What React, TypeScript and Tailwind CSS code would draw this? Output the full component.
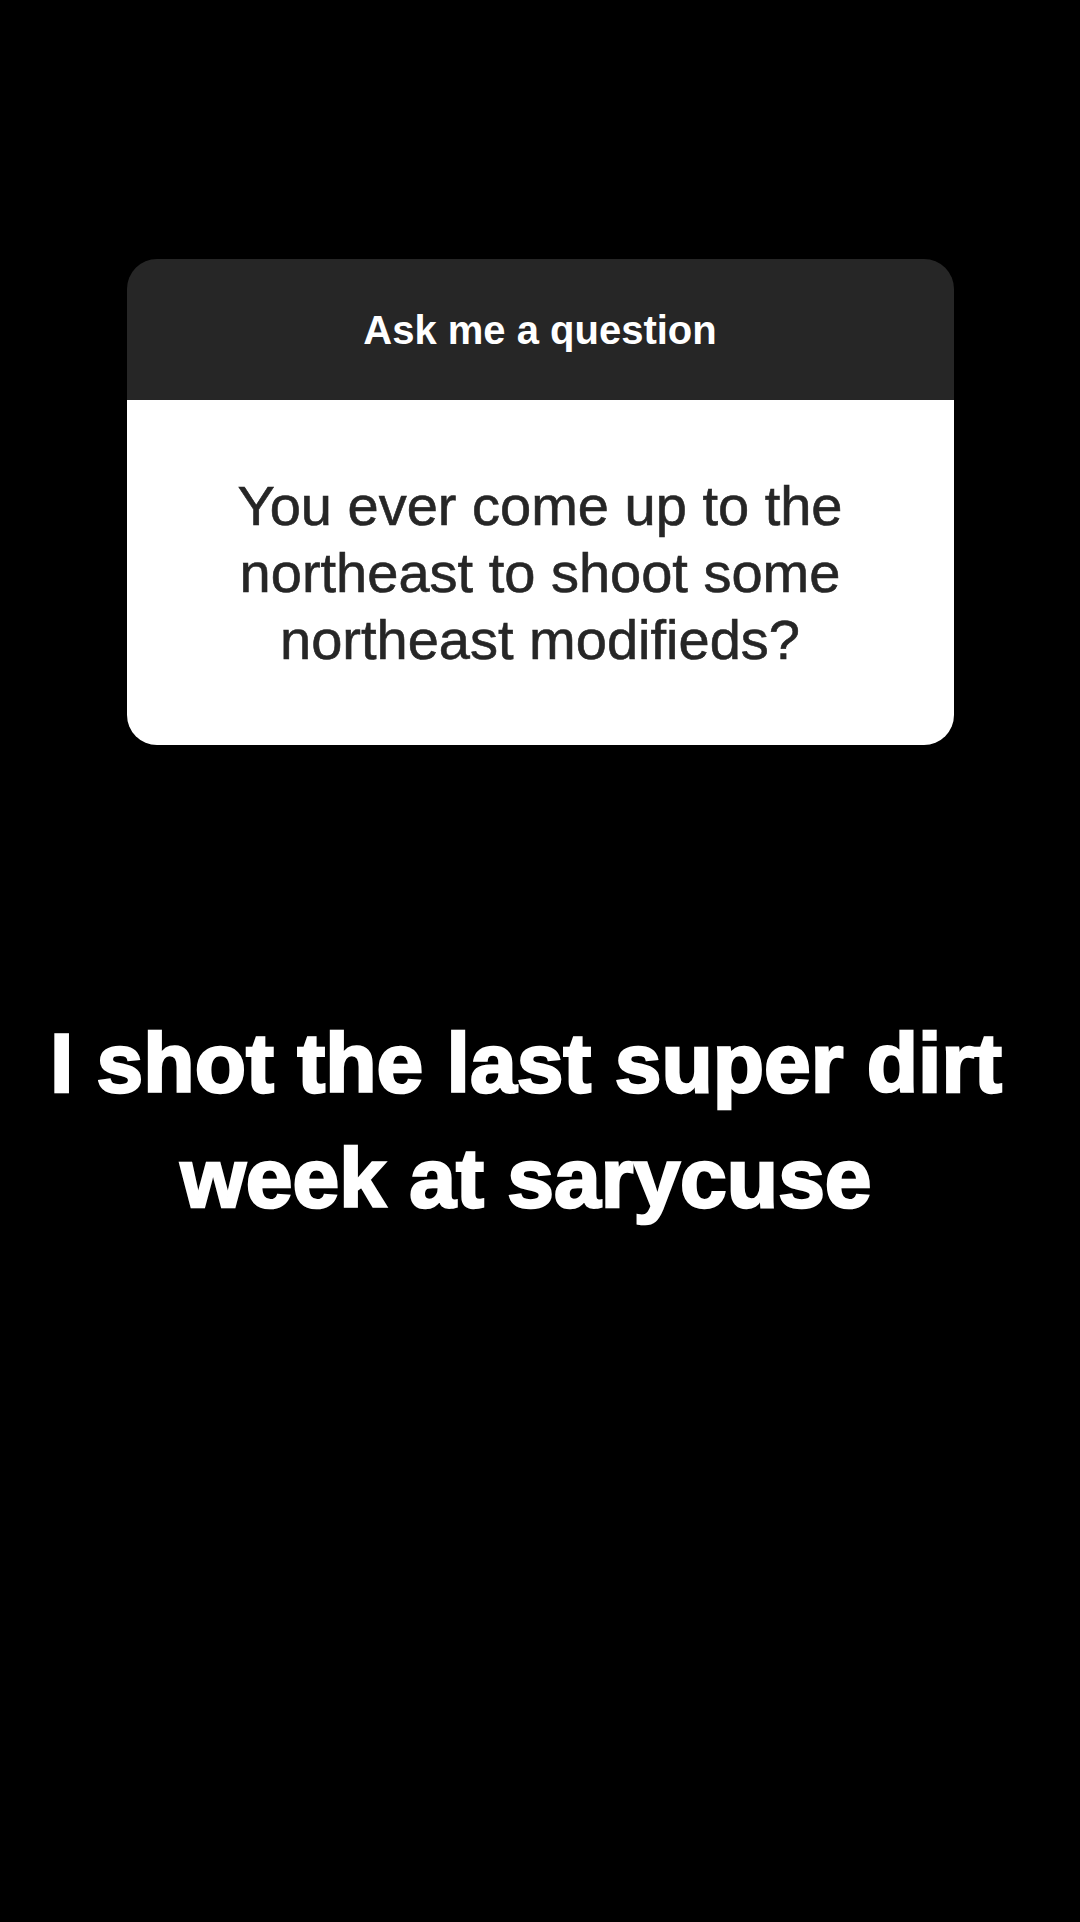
export default function App() {
  return (
    <div
      className="w-[1080px] h-[1922px] bg-black flex flex-col items-center"
      style={{ fontFamily: '"Liberation Sans", Arial, sans-serif' }}
    >
      <div className="mt-[259px] w-[827px] rounded-[30px] overflow-hidden flex flex-col">
        <div className="h-[141px] bg-[#262626] flex items-center justify-center">
          <span className="text-white text-[40px] leading-[48px] font-bold">
            Ask me a question
          </span>
        </div>
        <div className="h-[345px] bg-white flex items-center justify-center px-8">
          <p className="text-[#262626] text-[56px] leading-[67px] text-center [-webkit-text-stroke:0.6px_#262626]">
            You ever come up to the
            <br />
            northeast to shoot some
            <br />
            northeast modifieds?
          </p>
        </div>
      </div>

      <p className="mt-[261px] pr-[28px] text-white text-[84px] leading-[115px] font-bold text-center [-webkit-text-stroke:2.5px_white]">
        I shot the last super dirt
        <br />
        week at sarycuse
      </p>
    </div>
  );
}
